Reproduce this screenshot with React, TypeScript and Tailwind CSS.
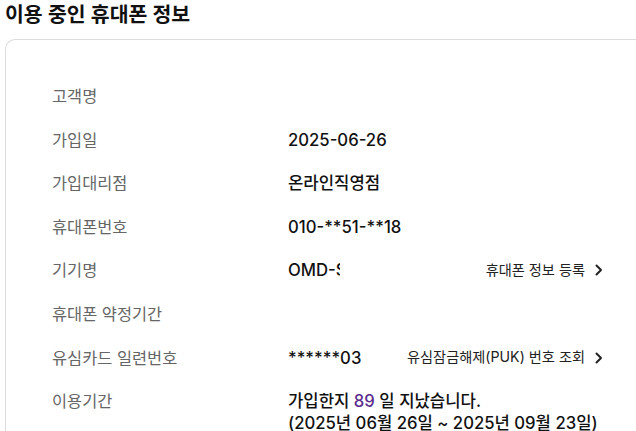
const font = { fontFamily: '"Inter", "Noto Sans CJK KR", sans-serif' };

function LinkButton({ label }: { label: string }) {
  return (
    <button className="flex items-center gap-[10px] text-[14.2px] font-normal text-[#222] leading-none">
      {label}
      <svg width="8" height="12" viewBox="0 0 8 12" fill="none">
        <path
          d="M1.5 1.5L6 6L1.5 10.5"
          stroke="#222"
          strokeWidth="2"
          strokeLinecap="round"
          strokeLinejoin="round"
        />
      </svg>
    </button>
  );
}

function Row({
  label,
  children,
}: {
  label: string;
  children?: React.ReactNode;
}) {
  return (
    <div className="flex items-start min-h-[43.6px]">
      <div className="w-[236px] shrink-0 text-[16.4px] text-[#666] leading-[22px] pt-[11px]">
        {label}
      </div>
      <div className="flex-1 flex items-center justify-between text-[16.7px] font-medium text-[#111] leading-[22px] pt-[11px]">
        {children}
      </div>
    </div>
  );
}

export default function App() {
  const rows = [
    { label: '가입일', value: '2025-06-26' },
    { label: '가입대리점', value: '온라인직영점' },
    { label: '휴대폰번호', value: '010-**51-**18' },
  ];

  return (
    <div className="h-[431px] w-[636px] overflow-hidden bg-white" style={font}>
      <h2 className="pl-[5px] pt-[1px] text-[20.5px] font-semibold text-[#111] leading-[28px]">
        이용 중인 휴대폰 정보
      </h2>
      <div className="ml-[5px] mt-[10px] border-t border-l border-[#dcdcdc] rounded-tl-[10px] pl-[46px] pr-[33px] pt-[34px]">
        <Row label="고객명" />
        {rows.map((r) => (
          <Row key={r.label} label={r.label}>
            <span>{r.value}</span>
          </Row>
        ))}
        <Row label="기기명">
          <span className="block w-[52px] overflow-hidden whitespace-nowrap">
            OMD-S
          </span>
          <LinkButton label="휴대폰 정보 등록" />
        </Row>
        <Row label="휴대폰 약정기간" />
        <Row label="유심카드 일련번호">
          <span>******03</span>
          <LinkButton label="유심잠금해제(PUK) 번호 조회" />
        </Row>
        <Row label="이용기간">
          <div>
            가입한지 <span className="text-[#5b2d8e]">89</span> 일 지났습니다.
            <br />
            (2025년 06월 26일 ~ 2025년 09월 23일)
          </div>
        </Row>
      </div>
    </div>
  );
}
